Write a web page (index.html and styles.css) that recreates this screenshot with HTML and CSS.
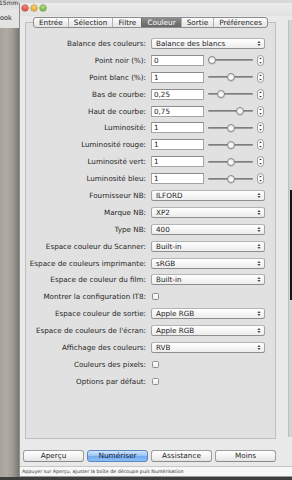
FILE: index.html
```html
<!DOCTYPE html>
<html lang="fr">
<head>
<meta charset="utf-8">
<title>Couleur</title>
<link rel="stylesheet" href="styles.css">
</head>
<body>
<div class="screen">
  <div class="top">
    <div class="desk">
      <div class="desk-files">
        <div class="file1">15mm-</div>
        <div class="file2">ook</div>
      </div>
      <div class="desk-bg"></div>
    </div>
    <div class="window">
      <div class="titlebar">
        <span class="light red"></span><span class="light yellow"></span><span class="light green"></span>
      </div>
      <div class="body">
        <div class="main">
          <div class="tabs">
            <div class="tab-group">
              <span class="tab">Entrée</span>
              <span class="tab">Sélection</span>
              <span class="tab">Filtre</span>
              <span class="tab sel">Couleur</span>
              <span class="tab">Sortie</span>
              <span class="tab">Préférences</span>
            </div>
          </div>
          <div class="panel">
            <div class="form">
              <div class="lbl">Balance des couleurs:</div>
              <div class="ctl"><div class="popup"><span>Balance des blancs</span><svg class="arr" width="4" height="7" viewBox="0 0 4 7"><path d="M0.4 3 L2 1 L3.6 3 Z M0.4 4 L2 6 L3.6 4 Z"/></svg></div></div>

              <div class="lbl">Point noir (%):</div>
              <div class="ctl sl"><div class="field">0</div><div class="slider"><div class="track"></div><div class="knob" style="left:0px"></div></div><svg class="stepper" width="7" height="11" viewBox="0 0 7 11"><rect x="0.5" y="0.5" width="6" height="10" rx="3" /><path d="M2.2 4 L3.5 2.6 L4.8 4 Z M2.2 7 L3.5 8.4 L4.8 7 Z"/></svg></div>

              <div class="lbl">Point blanc (%):</div>
              <div class="ctl sl"><div class="field">1</div><div class="slider"><div class="track"></div><div class="knob" style="left:18.5px"></div></div><svg class="stepper" width="7" height="11" viewBox="0 0 7 11"><rect x="0.5" y="0.5" width="6" height="10" rx="3" /><path d="M2.2 4 L3.5 2.6 L4.8 4 Z M2.2 7 L3.5 8.4 L4.8 7 Z"/></svg></div>

              <div class="lbl">Bas de courbe:</div>
              <div class="ctl sl"><div class="field">0,25</div><div class="slider"><div class="track"></div><div class="knob" style="left:9.25px"></div></div><svg class="stepper" width="7" height="11" viewBox="0 0 7 11"><rect x="0.5" y="0.5" width="6" height="10" rx="3" /><path d="M2.2 4 L3.5 2.6 L4.8 4 Z M2.2 7 L3.5 8.4 L4.8 7 Z"/></svg></div>

              <div class="lbl">Haut de courbe:</div>
              <div class="ctl sl"><div class="field">0,75</div><div class="slider"><div class="track"></div><div class="knob" style="left:27.75px"></div></div><svg class="stepper" width="7" height="11" viewBox="0 0 7 11"><rect x="0.5" y="0.5" width="6" height="10" rx="3" /><path d="M2.2 4 L3.5 2.6 L4.8 4 Z M2.2 7 L3.5 8.4 L4.8 7 Z"/></svg></div>

              <div class="lbl">Luminosité:</div>
              <div class="ctl sl"><div class="field">1</div><div class="slider"><div class="track"></div><div class="knob" style="left:18.5px"></div></div><svg class="stepper" width="7" height="11" viewBox="0 0 7 11"><rect x="0.5" y="0.5" width="6" height="10" rx="3" /><path d="M2.2 4 L3.5 2.6 L4.8 4 Z M2.2 7 L3.5 8.4 L4.8 7 Z"/></svg></div>

              <div class="lbl">Luminosité rouge:</div>
              <div class="ctl sl"><div class="field">1</div><div class="slider"><div class="track"></div><div class="knob" style="left:18.5px"></div></div><svg class="stepper" width="7" height="11" viewBox="0 0 7 11"><rect x="0.5" y="0.5" width="6" height="10" rx="3" /><path d="M2.2 4 L3.5 2.6 L4.8 4 Z M2.2 7 L3.5 8.4 L4.8 7 Z"/></svg></div>

              <div class="lbl">Luminosité vert:</div>
              <div class="ctl sl"><div class="field">1</div><div class="slider"><div class="track"></div><div class="knob" style="left:18.5px"></div></div><svg class="stepper" width="7" height="11" viewBox="0 0 7 11"><rect x="0.5" y="0.5" width="6" height="10" rx="3" /><path d="M2.2 4 L3.5 2.6 L4.8 4 Z M2.2 7 L3.5 8.4 L4.8 7 Z"/></svg></div>

              <div class="lbl">Luminosité bleu:</div>
              <div class="ctl sl"><div class="field">1</div><div class="slider"><div class="track"></div><div class="knob" style="left:18.5px"></div></div><svg class="stepper" width="7" height="11" viewBox="0 0 7 11"><rect x="0.5" y="0.5" width="6" height="10" rx="3" /><path d="M2.2 4 L3.5 2.6 L4.8 4 Z M2.2 7 L3.5 8.4 L4.8 7 Z"/></svg></div>

              <div class="lbl">Fournisseur NB:</div>
              <div class="ctl"><div class="popup"><span>ILFORD</span><svg class="arr" width="4" height="7" viewBox="0 0 4 7"><path d="M0.4 3 L2 1 L3.6 3 Z M0.4 4 L2 6 L3.6 4 Z"/></svg></div></div>

              <div class="lbl">Marque NB:</div>
              <div class="ctl"><div class="popup"><span>XP2</span><svg class="arr" width="4" height="7" viewBox="0 0 4 7"><path d="M0.4 3 L2 1 L3.6 3 Z M0.4 4 L2 6 L3.6 4 Z"/></svg></div></div>

              <div class="lbl">Type NB:</div>
              <div class="ctl"><div class="popup"><span>400</span><svg class="arr" width="4" height="7" viewBox="0 0 4 7"><path d="M0.4 3 L2 1 L3.6 3 Z M0.4 4 L2 6 L3.6 4 Z"/></svg></div></div>

              <div class="lbl">Espace couleur du Scanner:</div>
              <div class="ctl"><div class="popup"><span>Built-in</span><svg class="arr" width="4" height="7" viewBox="0 0 4 7"><path d="M0.4 3 L2 1 L3.6 3 Z M0.4 4 L2 6 L3.6 4 Z"/></svg></div></div>

              <div class="lbl">Espace de couleurs imprimante:</div>
              <div class="ctl"><div class="popup"><span>sRGB</span><svg class="arr" width="4" height="7" viewBox="0 0 4 7"><path d="M0.4 3 L2 1 L3.6 3 Z M0.4 4 L2 6 L3.6 4 Z"/></svg></div></div>

              <div class="lbl">Espace de couleur du film:</div>
              <div class="ctl"><div class="popup"><span>Built-in</span><svg class="arr" width="4" height="7" viewBox="0 0 4 7"><path d="M0.4 3 L2 1 L3.6 3 Z M0.4 4 L2 6 L3.6 4 Z"/></svg></div></div>

              <div class="lbl">Montrer la configuration IT8:</div>
              <div class="ctl"><span class="check"></span></div>

              <div class="lbl">Espace couleur de sortie:</div>
              <div class="ctl"><div class="popup"><span>Apple RGB</span><svg class="arr" width="4" height="7" viewBox="0 0 4 7"><path d="M0.4 3 L2 1 L3.6 3 Z M0.4 4 L2 6 L3.6 4 Z"/></svg></div></div>

              <div class="lbl">Espace de couleurs de l'écran:</div>
              <div class="ctl"><div class="popup"><span>Apple RGB</span><svg class="arr" width="4" height="7" viewBox="0 0 4 7"><path d="M0.4 3 L2 1 L3.6 3 Z M0.4 4 L2 6 L3.6 4 Z"/></svg></div></div>

              <div class="lbl">Affichage des couleurs:</div>
              <div class="ctl"><div class="popup"><span>RVB</span><svg class="arr" width="4" height="7" viewBox="0 0 4 7"><path d="M0.4 3 L2 1 L3.6 3 Z M0.4 4 L2 6 L3.6 4 Z"/></svg></div></div>

              <div class="lbl">Couleurs des pixels:</div>
              <div class="ctl"><span class="check"></span></div>

              <div class="lbl">Options par défaut:</div>
              <div class="ctl"><span class="check"></span></div>
            </div>
          </div>
          <div class="buttons">
            <span class="btn">Aperçu</span>
            <span class="btn primary">Numériser</span>
            <span class="btn">Assistance</span>
            <span class="btn">Moins</span>
          </div>
        </div>
        <div class="side"><div class="side-dark"></div></div>
      </div>
      <div class="status">Appuyer sur Aperçu, ajuster la boîte de découpe puis Numérisation</div>
    </div>
  </div>
  <div class="dock"></div>
</div>
</body>
</html>
```

FILE: styles.css
```css
html, body {
  margin: 0;
  padding: 0;
}
body {
  width: 292px;
  height: 480px;
  overflow: hidden;
  font-family: "DejaVu Sans", "Liberation Sans", sans-serif;
  color: #262626;
}
.screen {
  width: 292px;
  height: 480px;
  display: flex;
  flex-direction: column;
  background: #d9d9d9;
}
.top {
  flex: 1;
  display: flex;
  min-height: 0;
}
.desk {
  width: 19px;
  flex: none;
  display: flex;
  flex-direction: column;
  overflow: hidden;
}
.desk-files {
  height: 28px;
  background: linear-gradient(#d4d4d4, #e6e6e6 40%, #e2e2e2);
  font-size: 6px;
  color: #333;
  white-space: nowrap;
}
.file1 {
  line-height: 6px;
  margin-left: -1px;
}
.file2 {
  margin-top: 9px;
  line-height: 7px;
  font-size: 6.5px;
  color: #222;
}
.desk-bg {
  flex: 1;
  background: linear-gradient(90deg, #a6a29a 0%, #b0aca4 35%, #a19d96 65%, #85817b 90%, #77736e 100%);
}
.window {
  flex: 1;
  min-width: 0;
  margin-top: 3px;
  display: flex;
  flex-direction: column;
  background: #e9e9e9;
  border-left: 1px solid #8f8f8f;
  border-bottom: 1px solid #9a9a9a;
  overflow: hidden;
}
.titlebar {
  height: 13px;
  flex: none;
  display: flex;
  align-items: center;
  gap: 3px;
  padding-left: 2px;
  background: linear-gradient(#ececec, #e2e2e2);
}
.light {
  width: 6px;
  height: 6px;
  border-radius: 50%;
  margin-top: -3px;
}
.red { background: radial-gradient(circle at 50% 35%, #f08a80, #d8483e 70%); box-shadow: 0 0 0 0.5px #a8332c; }
.yellow { background: radial-gradient(circle at 50% 35%, #f6d47c, #e0a52a 70%); box-shadow: 0 0 0 0.5px #b0801c; }
.green { background: radial-gradient(circle at 50% 35%, #b6e48a, #6cb43a 70%); box-shadow: 0 0 0 0.5px #4f8a28; }
.body {
  flex: 1;
  display: flex;
  min-height: 0;
}
.main {
  width: 258px;
  flex: none;
  padding: 1px 0 4px 5px;
  display: flex;
  flex-direction: column;
}
.tabs {
  width: 251px;
  height: 11px;
  display: flex;
  justify-content: center;
  margin-bottom: -6px;
  position: relative;
  z-index: 1;
}
.tab-group {
  display: flex;
  border: 1px solid #8c8c8c;
  border-radius: 3px;
  overflow: hidden;
  background: linear-gradient(#fdfdfd, #eeeeee 55%, #e4e4e4);
  box-sizing: border-box;
  height: 11px;
}
.tab {
  padding: 0 5px;
  font-size: 7.3px;
  line-height: 9px;
  color: #262626;
  border-left: 1px solid #b2b2b2;
}
.tab:first-child {
  border-left: none;
}
.tab.sel {
  background: linear-gradient(#8e8e8e, #727272 60%, #6a6a6a);
  color: #fff;
  border-left-color: #6a6a6a;
}
.panel {
  width: 251px;
  height: 417px;
  box-sizing: border-box;
  border: 1px solid #bfbfbf;
  background: #e1e1e1;
  padding-top: 12px;
}
.form {
  display: grid;
  grid-template-columns: 120px 1fr;
  grid-auto-rows: 16.9px;
  column-gap: 5px;
  align-items: center;
  font-size: 7.2px;
}
.lbl {
  display: flex;
  justify-content: flex-end;
  white-space: nowrap;
  line-height: 9px;
  color: #262626;
}
.ctl {
  display: flex;
  align-items: center;
  height: 11px;
}
.popup {
  width: 114px;
  height: 11px;
  box-sizing: border-box;
  border: 1px solid #a3a3a3;
  border-top-color: #b4b4b4;
  border-bottom-color: #8e8e8e;
  border-radius: 2.5px;
  background: linear-gradient(#ffffff, #f6f6f6 50%, #ececec);
  display: flex;
  align-items: center;
  justify-content: space-between;
  padding: 0 3px 0 4px;
  line-height: 9px;
  white-space: nowrap;
  color: #222;
}
.arr {
  fill: #4a4a4a;
  flex: none;
}
.sl {
  gap: 4px;
}
.field {
  width: 53px;
  height: 11px;
  box-sizing: border-box;
  border: 1px solid #a5a5a5;
  border-top-color: #8c8c8c;
  background: #fff;
  padding-left: 2px;
  line-height: 9px;
  color: #222;
}
.slider {
  position: relative;
  width: 45px;
  height: 11px;
  display: flex;
  align-items: center;
}
.track {
  width: 100%;
  height: 2px;
  border-radius: 1px;
  background: #9c9c9c;
  border-top: 0.5px solid #7e7e7e;
  box-sizing: border-box;
}
.knob {
  position: absolute;
  top: 1.5px;
  width: 8px;
  height: 8px;
  box-sizing: border-box;
  border-radius: 50%;
  border: 1px solid #8a8a8a;
  background: radial-gradient(circle at 50% 70%, #ffffff, #f0f0f0 50%, #d6d6d6);
  box-shadow: 0 0.5px 0.5px rgba(0,0,0,0.25);
}
.stepper {
  flex: none;
}
.stepper rect {
  fill: #fbfbfb;
  stroke: #9a9a9a;
  stroke-width: 1;
}
.stepper path {
  fill: #3a3a3a;
}
.check {
  width: 7px;
  height: 7px;
  box-sizing: border-box;
  margin-left: 1px;
  border: 1px solid #8e8e8e;
  border-radius: 1.5px;
  background: linear-gradient(#ffffff, #ececec);
}
.buttons {
  display: flex;
  gap: 3px;
  width: 253px;
  margin: 11px 0 0 -2px;
  height: 12px;
}
.btn {
  flex: 1;
  box-sizing: border-box;
  height: 12px;
  border: 1px solid #9e9e9e;
  border-bottom-color: #8a8a8a;
  border-radius: 3px;
  background: linear-gradient(#ffffff, #f4f4f4 50%, #e4e4e4);
  font-size: 7.3px;
  line-height: 10px;
  text-align: center;
  color: #262626;
}
.btn.primary {
  border-color: #5a86c2;
  background: linear-gradient(#d2e6fc, #9cc6f4 45%, #74aaee 55%, #8ec0f6);
  color: #102040;
}
.side {
  width: 9px;
  flex: none;
  margin: 4px 0 0 5px;
  height: 417px;
  box-sizing: border-box;
  border-left: 1px solid #bdbdbd;
  background: #d4d4d4;
  padding-top: 170px;
}
.side-dark {
  height: 110px;
  margin-left: 1px;
  background: #161616;
}
.status {
  height: 10px;
  flex: none;
  box-sizing: border-box;
  border-top: 1px solid #c6c6c6;
  background: #f7f7f7;
  font-size: 4.8px;
  line-height: 9px;
  padding-left: 2px;
  color: #333;
  white-space: nowrap;
  overflow: hidden;
}
.dock {
  height: 3px;
  flex: none;
  background: #3e3e3e;
}
```
